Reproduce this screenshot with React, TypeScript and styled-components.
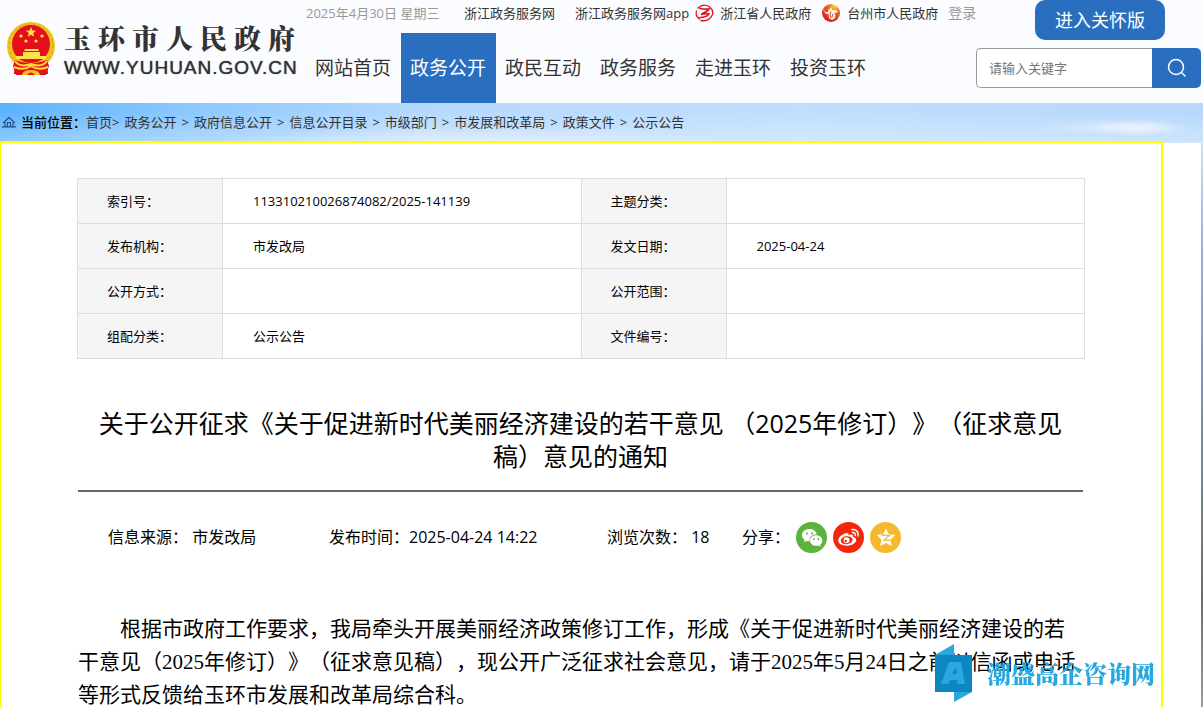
import React from 'react';
import styled, { createGlobalStyle, css } from 'styled-components';

const BLUE = '#2a6ebf';
const SANS = '"Open Sans", "Noto Sans CJK SC", sans-serif';
const SERIF = '"Liberation Serif", "Noto Sans CJK SC", sans-serif';

const GlobalStyle = createGlobalStyle`
  *, *::before, *::after { box-sizing: border-box; }
  body {
    margin: 0;
    color: #000;
    font-family: ${SANS};
    font-size: 13px;
    line-height: 20px;
    text-spacing-trim: space-all;
    overflow: hidden;
  }
  a { color: inherit; text-decoration: none; }
  button, input { font: inherit; }
`;

const Page = styled.div`
  min-height: 100vh;
  background: linear-gradient(180deg, #b8dcff 103px, #cfe3fb 143px, #a9cdf3 190px, #8db4de 250px, #6f97bd 400px, #717f84 520px, #6b6f6a 600px, #a39c92 707px);
`;

const Header = styled.header`
  display: flex;
  height: 103px;
  background: #fafcff;
`;

const Brand = styled.a`
  display: flex;
  flex: none;
  gap: 8px;
  width: 306px;
  padding: 20px 0 0 6px;
`;

const BrandText = styled.span`
  display: flex;
  flex-direction: column;
  color: #333;
`;

const BrandName = styled.span`
  font: 900 27px/36px "Noto Serif CJK SC", "Noto Sans CJK SC", serif;
  letter-spacing: 7px;
  white-space: nowrap;
`;

const BrandUrl = styled.span`
  font: 19px/24px "Liberation Sans", sans-serif;
  letter-spacing: 1px;
  white-space: nowrap;
  text-shadow: 0 0 1px #333;
`;

const Middle = styled.div`
  flex: 1;
  min-width: 0;
`;

const TopLinks = styled.div`
  display: flex;
  align-items: center;
  height: 33px;
  padding-bottom: 7px;
  color: #333;
  white-space: nowrap;
`;

const Muted = styled.span`
  flex: none;
  width: 158px;
  color: #999;
`;

const TopLink = styled.a<{ $gap?: number; $muted?: boolean }>`
  display: flex;
  flex: none;
  align-items: center;
  gap: 6px;
  margin-right: ${p => p.$gap ?? 10}px;
  ${p => p.$muted && css`color: #999; font-size: 14px;`}
`;

const Nav = styled.nav`
  display: flex;
`;

const NavLink = styled.a<{ $active?: boolean }>`
  width: 95px;
  padding-right: 1px;
  color: ${p => (p.$active ? '#fff' : '#333')};
  background: ${p => (p.$active ? BLUE : 'transparent')};
  font-size: 19px;
  line-height: 70px;
  text-align: center;
  white-space: nowrap;
`;

const Tools = styled.div`
  display: flex;
  flex: none;
  flex-direction: column;
  gap: 8px;
  width: 227px;
  padding-right: 2px;
`;

const CareButton = styled.button`
  align-self: flex-start;
  width: 130px;
  height: 40px;
  margin-left: 59px;
  padding: 0;
  border: 0;
  border-radius: 10px;
  color: #fff;
  background: ${BLUE};
  font-size: 18px;
`;

const Search = styled.form`
  display: flex;
  height: 40px;
`;

const SearchInput = styled.input`
  flex: 1;
  min-width: 0;
  padding: 0 12px;
  border: 1px solid #999;
  border-right: 0;
  border-radius: 5px 0 0 5px;
  background: #fff;
  &::placeholder { color: #757575; opacity: 1; }
`;

const SearchButton = styled.button`
  display: grid;
  place-items: center;
  width: 49px;
  padding: 0;
  border: 0;
  border-radius: 0 5px 5px 0;
  background: ${BLUE};
`;

const Sky = styled.div`
  height: 38px;
  background:
    radial-gradient(ellipse 50px 9px at 1140px 25px, rgba(242, 246, 255, 0.8), transparent),
    radial-gradient(ellipse 70px 8px at 1110px 24px, rgba(235, 242, 255, 0.6), transparent),
    radial-gradient(ellipse 260px 16px at 480px 40px, rgba(235, 242, 255, 0.8), transparent),
    linear-gradient(180deg, rgba(255, 255, 255, 0) 20%, rgba(255, 255, 255, 0.3)),
    linear-gradient(90deg, #5bb3fc, #8ec9fe 200px, #b5d9fd 430px, #c0defe 800px, #b5d8fc);
`;

const Crumbs = styled.nav`
  display: flex;
  align-items: center;
  gap: 5px;
  height: 38px;
  padding-left: 2px;
  color: #333;
  white-space: nowrap;
`;

const Here = styled.span`
  color: #000;
  font-weight: 500;
`;

const Sheet = styled.div`
  margin-right: 2px;
  padding-right: 38px;
  background: linear-gradient(180deg, #d3e6fc 2px, #fff 2px);
`;

const Article = styled.main`
  min-height: 566px;
  padding: 35px 78px 0 77px;
  border: 2px solid #ff0;
  border-left-width: 1px;
  border-bottom: 0;
  background: #fff;
`;

const Info = styled.table`
  width: calc(100% + 3px);
  margin-left: -1px;
  border-collapse: collapse;
  table-layout: fixed;
`;

const InfoLabel = styled.th`
  height: 45px;
  padding: 0 29px;
  border: 1px solid #ddd;
  background: #f5f5f5;
  font-weight: 400;
  text-align: left;
`;

const InfoValue = styled.td`
  padding: 0 30px;
  border: 1px solid #ddd;
`;

const Title = styled.h1`
  margin: 0;
  padding: 48px 15px 17px;
  border-bottom: 2px solid #666;
  font-size: 25px;
  font-weight: 400;
  line-height: 33px;
  text-align: center;
`;

const Meta = styled.div`
  display: flex;
  align-items: center;
  height: 90px;
  padding-left: 30px;
  font-size: 16px;
  white-space: nowrap;
`;

const MetaItem = styled.span<{ $width: number }>`
  flex: none;
  width: ${p => p.$width}px;
`;

const Share = styled.div`
  display: flex;
  align-items: center;
  gap: 6px;
`;

const ShareButton = styled.button<{ $color: string }>`
  display: grid;
  place-items: center;
  width: 31px;
  height: 31px;
  padding: 0;
  border: 0;
  border-radius: 50%;
  background: ${p => p.$color};
`;

const Body = styled.p`
  margin: 31px 0 0;
  font: 21px/33px ${SERIF};
  text-indent: 42px;
`;

const Watermark = styled.div`
  position: fixed;
  right: 48px;
  bottom: 5px;
  display: flex;
  align-items: center;
  gap: 14px;
  color: #29a8e0;
  font: 900 24px/32px "Noto Serif CJK SC", "Noto Sans CJK SC", serif;
`;

const Emblem = () => (
  <svg width="50" height="56" viewBox="0 0 50 56" aria-hidden="true">
    <path d="M9 42 8 54h34l-1-12z" fill="#e60012" />
    <ellipse cx="25" cy="26" rx="24" ry="24" fill="#f2c31d" />
    <circle cx="25" cy="26" r="22" fill="none" stroke="#dba216" strokeWidth="1" strokeDasharray="3 2" />
    <circle cx="25" cy="24" r="19" fill="#e50f1c" />
    <path d="m25 7 1.400 3.500 3.800.2-3 2.400 1 3.700-3.200-2.100-3.200 2.100 1-3.700-3-2.400 3.800-.2z" fill="#ffe14d" />
    <g fill="#ffe14d">
      <circle cx="15" cy="16" r="1.600" /><circle cx="36" cy="16" r="1.600" />
      <circle cx="20" cy="21" r="1.600" /><circle cx="30" cy="21" r="1.600" />
      <path d="M19 29h13l1 2H18zM17 32h17v4h6v3H10v-3h7z" />
    </g>
    <path d="M9 40q7 3 16 3t16-3l2 6-3 9h-8l-3-5h-8l-3 5h-8l-3-9z" fill="#e50f1c" />
    <path d="M9 41q5 7 16 3 11 4 16-3M8 47q10 4 17-1 7 5 17 1" fill="none" stroke="#ffd83a" strokeWidth="2" />
    <path d="M16 55q1-5 9-5t9 5z" fill="#f2c31d" />
    <path d="M21 55q4-5 8 0z" fill="#e50f1c" />
  </svg>
);

const ZhejiangLogo = () => (
  <svg width="19" height="18" viewBox="0 0 19 18" fill="none" stroke="#e60f1b" strokeLinecap="round" aria-hidden="true">
    <path d="M3 4Q8-1 14 2.500q5 4 3.500 8Q14 18 6 16.500" strokeWidth="1.300" />
    <path d="M5 4.500q5 1 9 .5-1 2-8 5.500 5-1.500 8-.5-3 3.500-9 3.500" strokeWidth="1.700" />
    <path d="M1.500 7q-1.500 5 3 8" strokeWidth="1.200" />
  </svg>
);

const TaizhouLogo = () => (
  <svg width="20" height="18" viewBox="0 0 20 18" aria-hidden="true">
    <defs>
      <radialGradient id="tz" cx=".7" cy=".1" r=".9">
        <stop offset="0" stopColor="#ffe02e" />
        <stop offset=".4" stopColor="#ef6a22" />
        <stop offset="1" stopColor="#d3201f" />
      </radialGradient>
    </defs>
    <circle cx="10" cy="9" r="9" fill="url(#tz)" />
    <path d="M2 4q1 5 5 4 0-3 4-4.500-1 3 3 2.500 2 0 3 2-2 1-4 1 3 3 0 6-1 1-3 .5-3-1.500-2-5-5 0-6-6.500z" fill="#fff" fillOpacity=".9" />
    <path d="M10 7.500q-2 3 0 6.500M12 10l-1 3" fill="none" stroke="#e0402a" />
  </svg>
);

const HomeIcon = () => (
  <svg width="14" height="12" viewBox="0 0 14 12" fill="none" stroke="#1f4e86" strokeWidth="1.200" aria-hidden="true">
    <path d="M1 7 7 1.500 13 7M3 6.500v4.300M11 6.500v4.300M0 10.800h14M5.500 10.500v-4h3v4" />
  </svg>
);

const SearchIcon = () => (
  <svg width="20" height="20" viewBox="0 0 20 20" fill="none" stroke="#fff" strokeWidth="1.500" aria-hidden="true">
    <circle cx="9" cy="9" r="7.500" />
    <path d="m14.500 14.500 4 4" />
  </svg>
);

const WechatIcon = () => (
  <svg width="31" height="31" viewBox="0 0 31 31" aria-hidden="true">
    <path d="M13.500 7C9 7 6 9.800 6 13.200c0 2 1 3.600 2.700 4.800L8 20.300l2.700-1.400c1 .3 1.900.4 2.900.4-.8-4 2.500-7 7.200-7C20 9 17 7 13.500 7z" fill="#fff" />
    <path d="M20.200 13.200c-3.600 0-6.200 2.300-6.200 5.200s2.700 5.300 6.200 5.300c.8 0 1.500-.1 2.200-.3l2.300 1.300-.6-2c1.400-1 2.300-2.500 2.300-4.300 0-2.900-2.700-5.200-6.200-5.200z" fill="#fff" />
    <g fill="#5bb43c">
      <circle cx="11" cy="11.500" r="1" /><circle cx="16" cy="11.500" r="1" />
      <circle cx="18" cy="17" r=".9" /><circle cx="22.300" cy="17" r=".9" />
    </g>
  </svg>
);

const WeiboIcon = () => (
  <svg width="31" height="31" viewBox="0 0 31 31" aria-hidden="true">
    <path d="M12.500 11.300c2-.8 3.500-.2 3 1.900 2.700-1.100 5-.8 4.300 1.500 1.800.6 3.400 1.500 3.400 3.300 0 3-4.300 5.700-9.300 5.700S5.200 21.400 5.200 18.500c0-2.700 3.700-6.100 7.300-7.200z" fill="#fff" />
    <ellipse cx="13.700" cy="18.300" rx="6" ry="4" fill="#f5270b" transform="rotate(-7 13.700 18.300)" />
    <circle cx="13.500" cy="18.300" r="3" fill="#fff" />
    <circle cx="12.700" cy="19" r="1.200" fill="#f5270b" />
    <path d="M19 7.600c4-.8 7 2.400 6 6.400M19.500 10.600c2-.3 3.400 1.200 2.800 3" fill="none" stroke="#fff" strokeWidth="1.500" strokeLinecap="round" />
  </svg>
);

const QzoneIcon = () => (
  <svg width="31" height="31" viewBox="0 0 31 31" aria-hidden="true">
    <path d="m16 6.500 2.800 5.700 6.400.9-4.600 4.500 1.100 6.300-5.700-3-5.700 3 1.100-6.300-4.600-4.500 6.400-.9z" fill="#fff" />
    <path d="M11.500 13.500q4-.8 8 0l-5.500 4.600q4 .8 8-.2" fill="none" stroke="#f5b92d" strokeWidth="1.300" />
  </svg>
);

const WatermarkLogo = () => (
  <svg width="38" height="58" viewBox="0 0 38 58" aria-hidden="true">
    <path d="M0 11 19 0v58l18-10V11z" fill="#29a8e0" />
    <path d="M0 11h37v37H0z" fill="#0c87bf" />
    <path d="M14 18h12l4 22h-7l-1-4h-7l-2 4H6zm3 12h5l-1-7z" fill="#29a8e0" fillRule="evenodd" />
  </svg>
);

const NAV = ['网站首页', '政务公开', '政民互动', '政务服务', '走进玉环', '投资玉环'];
const CRUMBS = ['政务公开', '政府信息公开', '信息公开目录', '市级部门', '市发展和改革局', '政策文件', '公示公告'];
const INFO = [
  ['索引号：', '113310210026874082/2025-141139', '主题分类：', ''],
  ['发布机构：', '市发改局', '发文日期：', '2025-04-24'],
  ['公开方式：', '', '公开范围：', ''],
  ['组配分类：', '公示公告', '文件编号：', ''],
];

export default function App() {
  return (
    <Page>
      <GlobalStyle />
      <Header>
        <Brand href="#">
          <Emblem />
          <BrandText>
            <BrandName>玉环市人民政府</BrandName>
            <BrandUrl>WWW.YUHUAN.GOV.CN</BrandUrl>
          </BrandText>
        </Brand>
        <Middle>
          <TopLinks>
            <Muted>2025年4月30日 星期三</Muted>
            <TopLink href="#" $gap={20}>浙江政务服务网</TopLink>
            <TopLink href="#" $gap={6}>浙江政务服务网app</TopLink>
            <TopLink href="#"><ZhejiangLogo />浙江省人民政府</TopLink>
            <TopLink href="#"><TaizhouLogo />台州市人民政府</TopLink>
            <TopLink href="#" $muted>登录</TopLink>
          </TopLinks>
          <Nav>
            {NAV.map(n => <NavLink href="#" key={n} $active={n === '政务公开'}>{n}</NavLink>)}
          </Nav>
        </Middle>
        <Tools>
          <CareButton type="button">进入关怀版</CareButton>
          <Search>
            <SearchInput type="text" placeholder="请输入关键字" aria-label="请输入关键字" />
            <SearchButton type="button" aria-label="搜索"><SearchIcon /></SearchButton>
          </Search>
        </Tools>
      </Header>
      <Sky>
        <Crumbs>
          <HomeIcon />
          <span><Here>当前位置：</Here><a href="#">首页</a>&gt;</span>
          {CRUMBS.map((c, i) => (
            <React.Fragment key={c}>
              {i > 0 && <span>&gt;</span>}
              <a href="#">{c}</a>
            </React.Fragment>
          ))}
        </Crumbs>
      </Sky>
      <Sheet>
        <Article>
          <Info>
            <colgroup>
              <col width="145" /><col /><col width="145" /><col />
            </colgroup>
            <tbody>
              {INFO.map(([a, b, c, d]) => (
                <tr key={a}>
                  <InfoLabel scope="row">{a}</InfoLabel>
                  <InfoValue>{b}</InfoValue>
                  <InfoLabel scope="row">{c}</InfoLabel>
                  <InfoValue>{d}</InfoValue>
                </tr>
              ))}
            </tbody>
          </Info>
          <Title>关于公开征求《关于促进新时代美丽经济建设的若干意见 （2025年修订）》（征求意见稿）意见的通知</Title>
          <Meta>
            <MetaItem $width={221}>信息来源： 市发改局</MetaItem>
            <MetaItem $width={278}>发布时间：2025-04-24 14:22</MetaItem>
            <MetaItem $width={135}>浏览次数： 18</MetaItem>
            <Share>
              <span>分享：</span>
              <ShareButton type="button" $color="#5bb43c" aria-label="微信"><WechatIcon /></ShareButton>
              <ShareButton type="button" $color="#f5270b" aria-label="微博"><WeiboIcon /></ShareButton>
              <ShareButton type="button" $color="#f5b92d" aria-label="QQ空间"><QzoneIcon /></ShareButton>
            </Share>
          </Meta>
          <Body>根据市政府工作要求，我局牵头开展美丽经济政策修订工作，形成《关于促进新时代美丽经济建设的若干意见（2025年修订）》（征求意见稿），现公开广泛征求社会意见，请于2025年5月24日之前以信函或电话等形式反馈给玉环市发展和改革局综合科。</Body>
        </Article>
      </Sheet>
      <Watermark><WatermarkLogo />潮盛高企咨询网</Watermark>
    </Page>
  );
}
